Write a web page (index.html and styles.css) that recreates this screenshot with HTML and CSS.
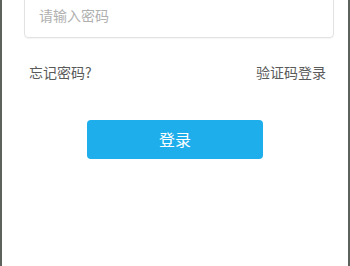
FILE: index.html
```html
<!DOCTYPE html>
<html lang="zh">
<head>
<meta charset="utf-8">
<link rel="stylesheet" href="styles.css">
</head>
<body>
<div class="frame">
  <div class="input-box"><span class="placeholder">请输入密码</span></div>
  <div class="links">
    <span class="link">忘记密码?</span>
    <span class="link">验证码登录</span>
  </div>
  <div class="btn-wrap">
    <div class="btn">登录</div>
  </div>
</div>
</body>
</html>
```
FILE: styles.css
```css
html, body {
  margin: 0;
  padding: 0;
  background: #ffffff;
}
body {
  font-family: "Noto Sans CJK SC", "Noto Sans", sans-serif;
  overflow: hidden;
}
.frame {
  box-sizing: border-box;
  width: 350px;
  height: 266px;
  border-left: 2px solid #5d625d;
  border-right: 2px solid #5d625d;
  background: #ffffff;
  display: flex;
  flex-direction: column;
  overflow: hidden;
}
.input-box {
  box-sizing: border-box;
  margin: -20px 14px 0 22px;
  height: 58px;
  border: 1px solid #e2e2e2;
  border-radius: 4px;
  box-shadow: 0 1px 1px rgba(0,0,0,0.04);
  display: flex;
  align-items: flex-end;
  padding: 0 0 12px 14px;
}
.placeholder {
  font-size: 14px;
  line-height: 20px;
  color: #b0b0b0;
}
.links {
  display: flex;
  justify-content: space-between;
  margin-top: 24px;
  padding: 0 22px 0 27px;
}
.link {
  font-size: 14px;
  line-height: 20px;
  color: #5a5a5a;
}
.btn-wrap {
  display: flex;
  justify-content: center;
  margin-top: 38px;
}
.btn {
  box-sizing: border-box;
  width: 176px;
  height: 39px;
  padding-bottom: 2px;
  border-radius: 4px;
  background: #1eaeeb;
  color: #ffffff;
  font-size: 16px;
  display: flex;
  align-items: center;
  justify-content: center;
}
```
